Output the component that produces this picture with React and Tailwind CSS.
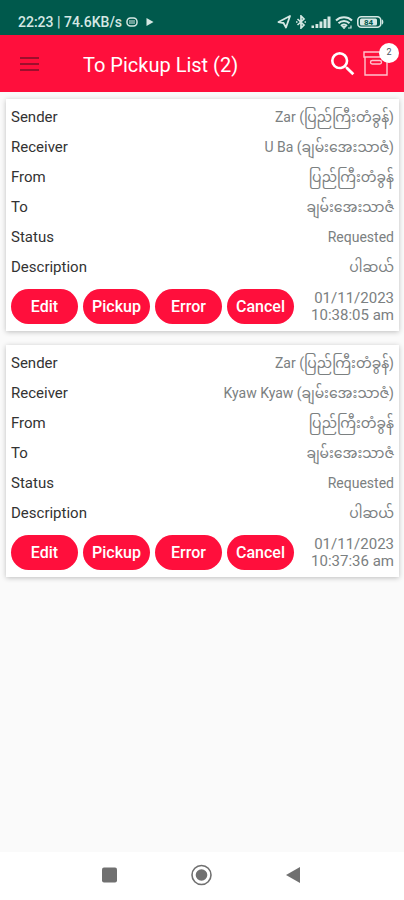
import { MdSearch } from "react-icons/md"

const pickups = [
  {
    id: 1,
    fields: [
      ["Sender", "Zar (ပြည်ကြီးတံခွန်)"],
      ["Receiver", "U Ba (ချမ်းအေးသာဇံ)"],
      ["From", "ပြည်ကြီးတံခွန်"],
      ["To", "ချမ်းအေးသာဇံ"],
      ["Status", "Requested"],
      ["Description", "ပါဆယ်"],
    ],
    date: "01/11/2023",
    time: "10:38:05 am",
  },
  {
    id: 2,
    fields: [
      ["Sender", "Zar (ပြည်ကြီးတံခွန်)"],
      ["Receiver", "Kyaw Kyaw (ချမ်းအေးသာဇံ)"],
      ["From", "ပြည်ကြီးတံခွန်"],
      ["To", "ချမ်းအေးသာဇံ"],
      ["Status", "Requested"],
      ["Description", "ပါဆယ်"],
    ],
    date: "01/11/2023",
    time: "10:37:36 am",
  },
]

const actions = ["Edit", "Pickup", "Error", "Cancel"]

function StatusBar() {
  return (
    <div className="flex h-[35px] items-end justify-between bg-[#00594c] pr-5 pb-1 pl-[18px] text-[#d5e8e4]">
      <div className="flex items-center">
        <span className="text-sm leading-[18px] font-medium">22:23 | 74.6KB/s</span>
        <svg className="ml-1 h-[10px] w-3" viewBox="0 0 12 10" fill="none" stroke="currentColor">
          <rect x="1" y="1" width="10" height="8" rx="3.500" strokeWidth="1.500" />
          <path d="M3 4h6M3 6h6" strokeWidth="1.200" />
        </svg>
        <svg className="ml-2 h-2 w-2" viewBox="0 0 8 8" fill="currentColor">
          <path d="M0.500 0L7.500 4L0.500 8z" />
        </svg>
      </div>
      <div className="flex h-[18px] items-center gap-1">
        <svg className="h-[14px] w-[14px]" viewBox="0 0 14 14" fill="none" stroke="currentColor" strokeWidth="1.800" strokeLinejoin="round">
          <path d="M13 1L1.500 7L6.500 8L9 12.500z" />
        </svg>
        <svg className="h-[14px] w-3" viewBox="0 0 12 14" fill="none" stroke="currentColor" strokeWidth="1.700">
          <path d="M2.500 4L9 10L6 13V1L9 4L2.500 10" />
          <path d="M1 7h1.500M9.500 7H11" />
        </svg>
        <svg className="h-3 w-5" viewBox="0 0 20 12" fill="currentColor">
          <path d="M0.500 9.500h2.500V12H0.500zM4.500 8h2.800v4H4.500zM8.500 5.500h2.900V12H8.500zM12.500 3h3v9h-3zM16.500 0.500h3V12h-3z" />
        </svg>
        <svg className="h-[13px] w-[18px]" viewBox="0 0 18 13" fill="none" stroke="currentColor" strokeWidth="2">
          <path d="M1 4.500C5.500 0.300 12.500 0.300 17 4.500" />
          <path d="M3.500 7.200C6.500 4.200 11.500 4.200 14.500 7.200" />
          <path d="M6 9.800C7.500 8 10.500 8 12 9.800" />
          <path d="M9 12.500L7.500 10.500h3zM13 12h3V9.500" strokeWidth="1.200" />
        </svg>
        <svg className="h-3 w-[27px]" viewBox="0 0 27 12" fill="none">
          <rect x="0.800" y="0.800" width="23" height="10.400" rx="3.500" stroke="currentColor" strokeWidth="1.600" />
          <rect x="3" y="2.500" width="17" height="7" rx="1.500" fill="currentColor" />
          <path d="M25 3.500c1.800 0.500 1.800 4.500 0 5z" fill="currentColor" />
          <text x="11.500" y="9" textAnchor="middle" fontSize="8" fontWeight="700" fill="#00594c">84</text>
        </svg>
      </div>
    </div>
  )
}

function Header() {
  return (
    <header className="flex h-[57px] items-center bg-[#ff0f3c] pr-[5px] pl-5 text-white">
      <button type="button" aria-label="Menu" className="text-[#9d0f2c]">
        <svg className="h-[14px] w-[19px]" viewBox="0 0 19 14" fill="none" stroke="currentColor" strokeWidth="2">
          <path d="M0 1h19M0 7h19M0 13h19" />
        </svg>
      </button>
      <h1 className="ml-11 grow pt-[2px] text-xl">To Pickup List ({pickups.length})</h1>
      <button type="button" aria-label="Search">
        <MdSearch className="h-8 w-8" />
      </button>
      <button type="button" aria-label="Pickup box" className="relative h-full w-10 pl-1">
        <svg className="h-[26px] w-[26px]" viewBox="0 0 26 26" fill="none" stroke="#ffc2cd" strokeWidth="1.400">
          <path d="M1 1h24v5H1zM2 6v18h22V6" />
          <rect x="7.500" y="9.500" width="11" height="3.500" rx="1.700" />
        </svg>
        <span className="absolute top-2 right-0 flex h-5 w-5 items-center justify-center rounded-full bg-white text-[9px] text-gray-600">
          {pickups.length}
        </span>
      </button>
    </header>
  )
}

function PickupCard({ pickup }) {
  return (
    <article className="bg-white px-[5px] pt-[3px] pb-[7px] shadow-[0_1px_5px_rgba(0,0,0,0.24)]">
      <dl>
        {pickup.fields.map(([label, value]) => (
          <div key={label} className="flex h-[30px] items-center justify-between leading-[30px]">
            <dt className="text-[15px] text-[#333333]">{label}</dt>
            <dd className="text-sm text-[#7b8081]">{value}</dd>
          </div>
        ))}
      </dl>
      <div className="mt-[7px] flex items-center justify-between">
        <div className="flex gap-[5px]">
          {actions.map((action) => (
            <button
              key={action}
              type="button"
              className="h-[35px] w-[67px] rounded-full bg-[#ff0f3c] text-base font-medium text-white"
            >
              {action}
            </button>
          ))}
        </div>
        <p className="text-right text-[15px] leading-[17px] text-[#7b8081]">
          {pickup.date}
          <br />
          {pickup.time}
        </p>
      </div>
    </article>
  )
}

function NavBar() {
  return (
    <nav className="flex h-12 items-center justify-center gap-[70px] bg-white pb-[2px] text-[#707070]">
      <button type="button" aria-label="Recent apps">
        <svg className="h-[22px] w-[22px]" viewBox="0 0 22 22" fill="currentColor">
          <rect x="3" y="3.500" width="15" height="15" rx="2" />
        </svg>
      </button>
      <button type="button" aria-label="Home">
        <svg className="h-[22px] w-[22px]" viewBox="0 0 22 22">
          <circle cx="10.500" cy="11" r="9.500" fill="none" stroke="currentColor" strokeWidth="1.600" />
          <circle cx="10.500" cy="11" r="5.800" fill="currentColor" />
        </svg>
      </button>
      <button type="button" aria-label="Back">
        <svg className="h-[22px] w-[22px]" viewBox="0 0 22 22" fill="currentColor">
          <path d="M17 3v16L3 11z" />
        </svg>
      </button>
    </nav>
  )
}

export default function App() {
  return (
    <div className="flex min-h-screen flex-col bg-[#fafafa] font-['Roboto','Noto_Sans_Myanmar','Noto_Sans',sans-serif]">
      <StatusBar />
      <Header />
      <main className="flex grow flex-col gap-[14px] pt-[7px] pr-[5px] pl-1.5">
        {pickups.map((pickup) => (
          <PickupCard key={pickup.id} pickup={pickup} />
        ))}
      </main>
      <NavBar />
    </div>
  )
}
